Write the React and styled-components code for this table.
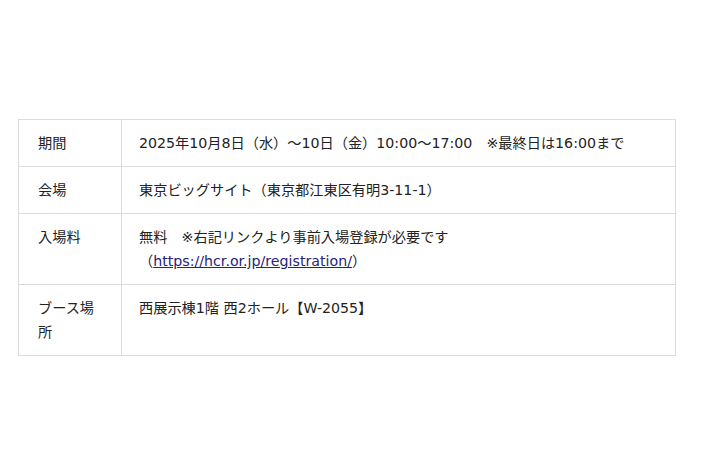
import styled, { createGlobalStyle } from 'styled-components';

// --------Styles-------

const GlobalStyle = createGlobalStyle`
  body {
    margin: 0;
    background: #fff;
    font-family: "DejaVu Sans", "Noto Sans CJK JP", sans-serif;
  }
`;

const Page = styled.div`
  width: 710px;
  height: 474px;
  padding: 119px 34px 0 18px;
  box-sizing: border-box;
`;

const InfoTable = styled.table`
  width: 658px;
  border-collapse: collapse;
  font-size: 14.2px;
  line-height: 24px;
  color: #222;
`;

const Cell = styled.td`
  border: 1px solid #dcdcdc;
  padding: 11px 19px;
  vertical-align: top;
  text-align: left;
`;

const Label = styled(Cell)`
  width: 103px;
  box-sizing: border-box;
`;

const Value = styled(Cell)`
  padding-left: 17px;
`;

const Link = styled.a`
  color: #24247a;
  text-decoration: underline;
`;

const rows = [
  { label: '期間', value: '2025年10月8日（水）～10日（金）10:00～17:00　※最終日は16:00まで' },
  { label: '会場', value: '東京ビッグサイト（東京都江東区有明3-11-1）' },
  {
    label: '入場料',
    value: (
      <>
        無料　※右記リンクより事前入場登録が必要です
        <br />
        （<Link href="https://hcr.or.jp/registration/">https://hcr.or.jp/registration/</Link>）
      </>
    ),
  },
  { label: 'ブース場所', value: '西展示棟1階 西2ホール【W-2055】' },
];

function App() {
  return (
    <Page>
      <GlobalStyle />
      <InfoTable>
        <tbody>
          {rows.map(row => (
            <tr key={row.label}>
              <Label>{row.label}</Label>
              <Value>{row.value}</Value>
            </tr>
          ))}
        </tbody>
      </InfoTable>
    </Page>
  );
}

export default App;
